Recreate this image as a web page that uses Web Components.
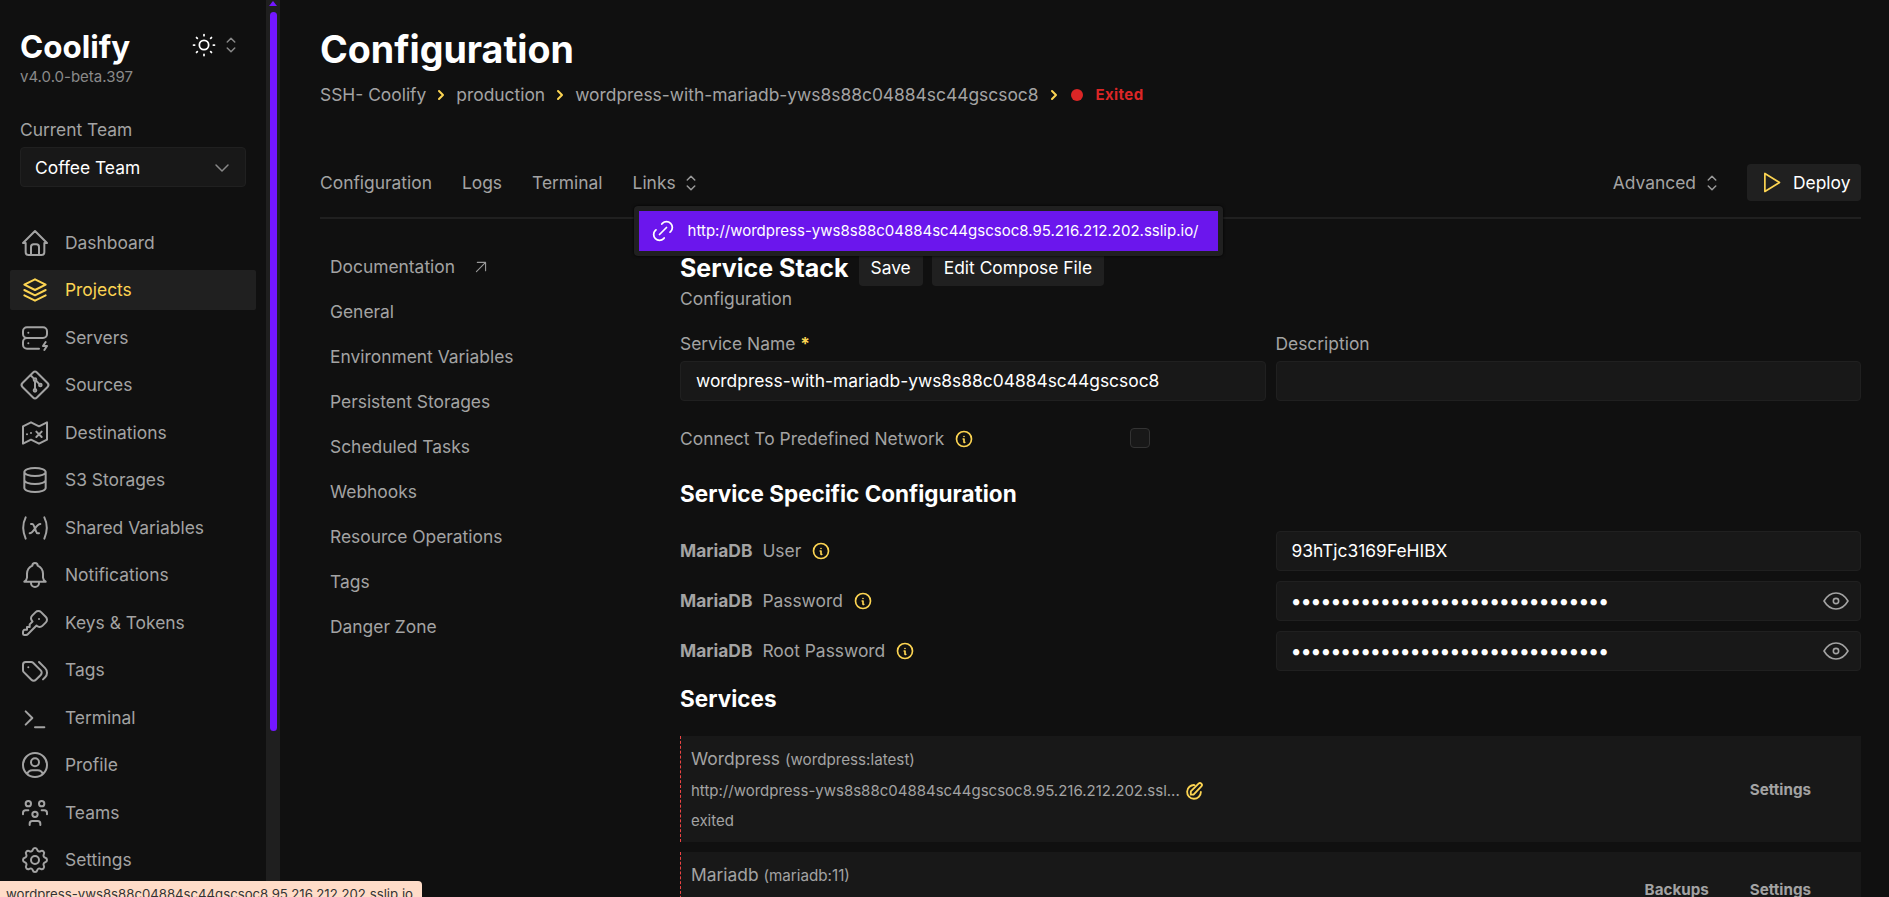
<!DOCTYPE html>
<html lang="en">
<head>
<meta charset="utf-8">
<title>Configuration | Coolify</title>
<style>
    html, body { margin: 0; height: 100%; overflow: hidden; background: #101010; }
    body { font-family: Inter, "Liberation Sans", sans-serif; color: #a3a3a3; font-size: 17.4px; line-height: 24px; }
</style>
</head>
<body>
<coolify-app>
    <coolify-sidebar slot="sidebar"></coolify-sidebar>
    <page-header slot="main"></page-header>
    <page-tabs slot="main"></page-tabs>
    <config-layout slot="main">
        <sub-nav slot="nav"></sub-nav>
        <service-stack-form slot="content"></service-stack-form>
    </config-layout>
</coolify-app>
<status-bubble>wordpress-yws8s88c04884sc44gscsoc8.95.216.212.202.sslip.io</status-bubble>

<script>
const ICONS = {
    home: 'M5 12H3l9-9 9 9h-2M5 12v7a2 2 0 0 0 2 2h10a2 2 0 0 0 2-2v-7M9 21v-6a2 2 0 0 1 2-2h2a2 2 0 0 1 2 2v6',
    stack: 'M12 4L4 8l8 4 8-4-8-4M4 12l8 4 8-4M4 16l8 4 8-4',
    server: 'M3 7a3 3 0 0 1 3-3h12a3 3 0 0 1 3 3v2a3 3 0 0 1-3 3H6a3 3 0 0 1-3-3zM15 20H6a3 3 0 0 1-3-3v-2a3 3 0 0 1 3-3h12M7 8v.01M7 16v.01M20 15l-2 3h3l-2 3',
    git: 'M15 12a1 1 0 1 0 2 0a1 1 0 1 0-2 0M11 8a1 1 0 1 0 2 0a1 1 0 1 0-2 0M11 16a1 1 0 1 0 2 0a1 1 0 1 0-2 0M12 15V9M15 11l-2-2M11 7L9.1 5.1M13.446 2.6l7.955 7.954a2.045 2.045 0 0 1 0 2.892l-7.955 7.955a2.045 2.045 0 0 1-2.892 0l-7.955-7.955a2.045 2.045 0 0 1 0-2.892l7.955-7.955a2.045 2.045 0 0 1 2.892 0z',
    map: 'M3 7l6-3 6 3 6-3v13l-6 3-6-3-6 3zM9 12v.01M6 13v.01M17 15l-4-4M13 15l4-4',
    database: 'M4 6a8 3 0 1 0 16 0a8 3 0 1 0-16 0M4 6v6a8 3 0 0 0 16 0V6M4 12v6a8 3 0 0 0 16 0v-6',
    variable: 'M5 4C2.5 9 2.5 14 5 20M19 4c2.5 5 2.5 10 0 16M9 9h1c1 0 1 1 2.016 3.527C13 15 13 16 14 16h1M8 16c1.5 0 3-2 4-3.5S14.5 9 16 9',
    bell: 'M10 5a2 2 0 1 1 4 0 7 7 0 0 1 4 6v3a4 4 0 0 0 2 3H4a4 4 0 0 0 2-3v-3a7 7 0 0 1 4-6M9 17v1a3 3 0 0 0 6 0v-1',
    key: 'M16.555 3.843l3.602 3.602a2.877 2.877 0 0 1 0 4.069l-2.643 2.643a2.877 2.877 0 0 1-4.069 0l-.301-.301-6.558 6.558a2 2 0 0 1-1.239.578L5.172 21H4a1 1 0 0 1-.993-.883L3 20v-1.172a2 2 0 0 1 .467-1.284l.119-.13L4 17h2v-2h2v-2l2.144-2.144-.301-.301a2.877 2.877 0 0 1 0-4.069l2.643-2.643a2.877 2.877 0 0 1 4.069 0zM15 9h.01',
    tags: 'M3 8v4.172a2 2 0 0 0 .586 1.414l5.71 5.71a2.41 2.41 0 0 0 3.408 0l3.592-3.592a2.41 2.41 0 0 0 0-3.408l-5.71-5.71A2 2 0 0 0 9.172 6H5a2 2 0 0 0-2 2zM18 19l1.592-1.592a4.82 4.82 0 0 0 0-6.816L15 6M7 10h-.01',
    terminal: 'M5 7l5 5-5 5M12 19h7',
    profile: 'M3 12a9 9 0 1 0 18 0a9 9 0 1 0-18 0M9 10a3 3 0 1 0 6 0a3 3 0 1 0-6 0M6.168 18.849A4 4 0 0 1 10 16h4a4 4 0 0 1 3.834 2.855',
    users: 'M10 13a2 2 0 1 0 4 0a2 2 0 0 0-4 0M8 21v-1a2 2 0 0 1 2-2h4a2 2 0 0 1 2 2v1M15 5a2 2 0 1 0 4 0a2 2 0 0 0-4 0M17 10h2a2 2 0 0 1 2 2v1M5 5a2 2 0 1 0 4 0a2 2 0 0 0-4 0M3 13v-1a2 2 0 0 1 2-2h2',
    settings: 'M10.325 4.317c.426-1.756 2.924-1.756 3.35 0a1.724 1.724 0 0 0 2.573 1.066c1.543-.94 3.31.826 2.37 2.37a1.724 1.724 0 0 0 1.065 2.572c1.756.426 1.756 2.924 0 3.35a1.724 1.724 0 0 0-1.066 2.573c.94 1.543-.826 3.31-2.37 2.37a1.724 1.724 0 0 0-2.572 1.065c-.426 1.756-2.924 1.756-3.35 0a1.724 1.724 0 0 0-2.573-1.066c-1.543.94-3.31-.826-2.37-2.37a1.724 1.724 0 0 0-1.065-2.572c-1.756-.426-1.756-2.924 0-3.35a1.724 1.724 0 0 0 1.066-2.573c-.94-1.543.826-3.31 2.37-2.37c1 .608 2.296.07 2.572-1.065zM9 12a3 3 0 1 0 6 0a3 3 0 0 0-6 0',
    sun: 'M8 12a4 4 0 1 0 8 0a4 4 0 1 0-8 0M3 12h1m8-9v1m8 8h1m-9 8v1M5.6 5.6l.7.7m12.1-.7l-.7.7m0 11.4l.7.7m-12.1-.7l-.7.7',
    updown: 'M8.25 15L12 18.75 15.75 15m-7.5-6L12 5.25 15.75 9',
    down: 'M6 9l6 6 6-6',
    right: 'M9 6l6 6-6 6',
    play: 'M7 4v16l13-8z',
    link: 'M9 15l6-6M11 6l.463-.536a5 5 0 0 1 7.071 7.072L18 13M13 18l-.397.534a5.068 5.068 0 0 1-7.127 0 4.972 4.972 0 0 1 0-7.071L6 11',
    info: 'M12 9h.01M3 12a9 9 0 1 0 18 0a9 9 0 0 0-18 0M11 12h1v4h1',
    eye: 'M10 12a2 2 0 1 0 4 0a2 2 0 0 0-4 0M21 12c-2.4 4-5.4 6-9 6s-6.6-2-9-6c2.4-4 5.4-6 9-6s6.6 2 9 6',
    external: 'M7 17L17 7M8 7h9v9',
    pencil: 'M12.5 5.5A7.5 7.5 0 1 0 19.5 13M8.5 16v-3.5L17 4a2.1 2.1 0 0 1 3 3l-8.5 9z'
};

// little helper so each class only has to declare its markup
function shadow(el, html) {
    el.attachShadow({ mode: 'open' });
    el.shadowRoot.innerHTML = html;
}

class CIcon extends HTMLElement {
    connectedCallback() {
        const size = this.getAttribute('size') || 24;
        const stroke = this.getAttribute('stroke') || 1.5;
        shadow(this, `
            <style>
                :host { display: inline-flex; flex: none; width: ${size}px; height: ${size}px; }
                svg { display: block; }
            </style>
            <svg width="${size}" height="${size}" viewBox="0 0 24 24" fill="none" stroke="currentColor"
                stroke-width="${stroke}" stroke-linecap="round" stroke-linejoin="round">
                <path d="${ICONS[this.getAttribute('name')]}"/>
            </svg>`);
    }
}
customElements.define('c-icon', CIcon);

class CoolifyApp extends HTMLElement {
    connectedCallback() {
        shadow(this, `
            <style>
                :host { display: flex; height: 897px; overflow: hidden; background: #101010; }
                .rail { flex: none; width: 14px; background: #1f1f1f; display: flex; justify-content: center; position: relative; }
                .rail i { display: block; width: 7px; height: 719px; margin-top: 12px; margin-left: 1px; border-radius: 4px; background: #7317ff; }
                .rail b { position: absolute; top: 1px; left: 3px; border: 4px solid transparent; border-top: 0; border-bottom: 5px solid #7317ff; }
                main { flex: 1; min-width: 0; padding: 30px 28px 0 40px; }
            </style>
            <slot name="sidebar"></slot>
            <div class="rail"><b></b><i></i></div>
            <main><slot name="main"></slot></main>`);
    }
}
customElements.define('coolify-app', CoolifyApp);

class NavItem extends HTMLElement {
    connectedCallback() {
        const active = this.hasAttribute('active');
        shadow(this, `
            <style>
                :host { display: flex; align-items: center; gap: 14px; height: 40px; padding-left: 9px; border-radius: 2px;
                    color: ${active ? '#fcd452' : '#a3a3a3'}; background: ${active ? '#202020' : 'transparent'}; }
            </style>
            <c-icon name="${this.getAttribute('icon')}" size="32"></c-icon>
            <slot></slot>`);
    }
}
customElements.define('nav-item', NavItem);

class CoolifySidebar extends HTMLElement {
    connectedCallback() {
        shadow(this, `
            <style>
                :host { display: block; flex: none; width: 266px; box-sizing: border-box; padding: 30px 10px 0; }
                .brand { display: flex; align-items: flex-start; padding-left: 10px; }
                .name { color: #fff; font-size: 31.4px; font-weight: 700; line-height: 34px; }
                .version { font-size: 15px; line-height: 20px; color: #8a8a8a; margin-top: 3px; }
                .theme { display: flex; align-items: center; margin-left: auto; margin-right: 13px; margin-top: 1px; color: #fff; }
                .theme c-icon + c-icon { color: #888; margin-left: 1px; }
                .team { line-height: 24px; padding-left: 10px; margin-top: 31px; }
                .select { display: flex; align-items: center; justify-content: space-between; height: 40px; margin: 5px 0 0 10px;
                    padding: 1px 11px 0 14px; box-sizing: border-box; width: 226px; background: #181818; border: 1px solid #202020; border-radius: 4px; color: #fff; }
                .select c-icon { color: #888; }
                nav { display: flex; flex-direction: column; gap: 7.5px; margin-top: 35.5px; }
            </style>
            <div class="brand">
                <div>
                    <div class="name">Coolify</div>
                    <div class="version">v4.0.0-beta.397</div>
                </div>
                <div class="theme">
                    <c-icon name="sun" size="28"></c-icon>
                    <c-icon name="updown" size="24"></c-icon>
                </div>
            </div>
            <div class="team">Current Team</div>
            <div class="select">Coffee Team <c-icon name="down" size="24"></c-icon></div>
            <nav>
                <nav-item icon="home">Dashboard</nav-item>
                <nav-item icon="stack" active>Projects</nav-item>
                <nav-item icon="server">Servers</nav-item>
                <nav-item icon="git">Sources</nav-item>
                <nav-item icon="map">Destinations</nav-item>
                <nav-item icon="database">S3 Storages</nav-item>
                <nav-item icon="variable">Shared Variables</nav-item>
                <nav-item icon="bell">Notifications</nav-item>
                <nav-item icon="key">Keys &amp; Tokens</nav-item>
                <nav-item icon="tags">Tags</nav-item>
                <nav-item icon="terminal">Terminal</nav-item>
                <nav-item icon="profile">Profile</nav-item>
                <nav-item icon="users">Teams</nav-item>
                <nav-item icon="settings">Settings</nav-item>
            </nav>`);
    }
}
customElements.define('coolify-sidebar', CoolifySidebar);

class PageHeader extends HTMLElement {
    connectedCallback() {
        shadow(this, `
            <style>
                :host { display: block; }
                h1 { margin: 0; color: #fff; font-size: 37.6px; font-weight: 700; line-height: 40px; }
                .crumbs { display: flex; align-items: center; height: 24px; margin-top: 13px; white-space: nowrap; }
                .crumbs c-icon { color: #fcd452; margin: 0 7px; }
                .dot { width: 12px; height: 12px; border-radius: 50%; background: #dc2626; margin: 0 13px 0 2px; }
                .status { color: #dc2626; font-size: 15px; font-weight: 700; letter-spacing: .4px; }
            </style>
            <h1>Configuration</h1>
            <div class="crumbs">
                <span>SSH- Coolify</span><c-icon name="right" size="16" stroke="3"></c-icon>
                <span>production</span><c-icon name="right" size="16" stroke="3"></c-icon>
                <span>wordpress-with-mariadb-yws8s88c04884sc44gscsoc8</span><c-icon name="right" size="16" stroke="3"></c-icon>
                <span class="dot"></span><span class="status">Exited</span>
            </div>`);
    }
}
customElements.define('page-header', PageHeader);

class PageTabs extends HTMLElement {
    connectedCallback() {
        shadow(this, `
            <style>
                :host { display: flex; align-items: center; gap: 30px; height: 37px; margin-top: 57px; padding-bottom: 16px; border-bottom: 2px solid #202020; white-space: nowrap; }
                .links, .adv { display: flex; align-items: center; gap: 3px; position: relative; }
                .adv { margin-left: auto; margin-right: 23px; gap: 4px; }
                c-icon { color: #999; }
                .deploy { display: flex; align-items: center; gap: 9px; height: 37px; width: 114px; box-sizing: border-box; padding-left: 10px; margin-left: -30px;
                    background: #202020; border-radius: 4px; color: #fff; }
                .deploy c-icon { color: #fcd452; }
                .menu { position: absolute; top: 35.5px; left: 1px; z-index: 5; width: 589px; box-sizing: border-box; padding: 5px; background: #202020;
                    border-radius: 4px; box-shadow: 0 0 3px #000; }
                .item { display: flex; align-items: center; gap: 11px; height: 40px; padding-left: 10px; background: #6b16ed; color: #fff; font-size: 15px; }
                .item c-icon { color: #fff; }
            </style>
            <span>Configuration</span>
            <span>Logs</span>
            <span>Terminal</span>
            <span class="links">Links <c-icon name="updown" size="24"></c-icon>
                <div class="menu"><div class="item"><c-icon name="link" size="28"></c-icon>http://wordpress-yws8s88c04884sc44gscsoc8.95.216.212.202.sslip.io/</div></div>
            </span>
            <span class="adv">Advanced <c-icon name="updown" size="24"></c-icon></span>
            <span class="deploy"><c-icon name="play" size="27"></c-icon>Deploy</span>`);
    }
}
customElements.define('page-tabs', PageTabs);

class ConfigLayout extends HTMLElement {
    connectedCallback() {
        shadow(this, `
            <style>
                :host { display: grid; grid-template-columns: 360px minmax(0, 1fr); }
            </style>
            <slot name="nav"></slot>
            <slot name="content"></slot>`);
    }
}
customElements.define('config-layout', ConfigLayout);

class SubNav extends HTMLElement {
    connectedCallback() {
        const items = ['General', 'Environment Variables', 'Persistent Storages', 'Scheduled Tasks', 'Webhooks', 'Resource Operations', 'Tags', 'Danger Zone'];
        shadow(this, `
            <style>
                :host { display: block; padding: 25px 0 0 10px; }
                div { display: flex; align-items: center; height: 45px; }
                c-icon { margin-left: 15px; color: #999; }
            </style>
            <div>Documentation <c-icon name="external" size="22" stroke="1.2"></c-icon></div>
            ${items.map(i => `<div>${i}</div>`).join('')}`);
    }
}
customElements.define('sub-nav', SubNav);

class CInfo extends HTMLElement {
    connectedCallback() {
        shadow(this, `
            <style>:host { display: inline-flex; color: #fcd452; margin-left: 10px; }</style>
            <c-icon name="info" size="20" stroke="2"></c-icon>`);
    }
}
customElements.define('c-info', CInfo);

class CField extends HTMLElement {
    connectedCallback() {
        const eye = this.hasAttribute('secret');
        shadow(this, `
            <style>
                :host { display: flex; align-items: center; height: 40px; box-sizing: border-box; padding: 0 8px 0 15px; background: #181818;
                    border: 1px solid #202020; border-radius: 4px; color: #fff; white-space: nowrap; }
                :host([secret]) { font-size: 20px; letter-spacing: -1.33px; padding-left: 14px; }
                c-icon { margin-left: auto; color: #a3a3a3; }
            </style>
            <slot></slot>
            ${eye ? '<c-icon name="eye" size="32" stroke="1.2"></c-icon>' : ''}`);
    }
}
customElements.define('c-field', CField);

class CBtn extends HTMLElement {
    connectedCallback() {
        shadow(this, `
            <style>
                :host { display: inline-flex; align-items: center; height: 37px; padding: 0 12px; background: #202020; border-radius: 4px; color: #fff; }
            </style>
            <slot></slot>`);
    }
}
customElements.define('c-btn', CBtn);

class ServiceRow extends HTMLElement {
    connectedCallback() {
        shadow(this, `
            <style>
                :host { display: flex; align-items: center; background: #181818; border-left: 1px dashed #ef4444; padding: 10px 50px 9px 10px; }
                .info { flex: 1; min-width: 0; }
                .name { line-height: 24px; margin-top: 1px; }
                .name small { font-size: 15.2px; }
                .actions { display: flex; gap: 41px; font-size: 15.2px; font-weight: 700; color: #a3a3a3; }
                ::slotted([slot=line]) { display: block; font-size: 15px; line-height: 24px; margin-top: 6.5px; }
            </style>
            <div class="info">
                <div class="name">${this.getAttribute('name')} <small>(${this.getAttribute('image')})</small></div>
                <slot name="line"></slot>
            </div>
            <div class="actions"><slot name="action"></slot></div>`);
    }
}
customElements.define('service-row', ServiceRow);

class ServiceStackForm extends HTMLElement {
    connectedCallback() {
        const dots = '•'.repeat(32);
        shadow(this, `
            <style>
                :host { display: block; padding-top: 30px; }
                .top { display: flex; align-items: center; gap: 9px; }
                h2 { margin: 0 1px 0 0; color: #fff; font-size: 25px; font-weight: 700; line-height: 32px; }
                h3 { margin: 0; color: #fff; font-size: 22.5px; font-weight: 700; line-height: 28px; }
                .sub { line-height: 24px; margin-top: 1px; }
                .cols { display: grid; grid-template-columns: 1fr 1fr; gap: 5px 10px; margin-top: 21px; }
                .cols label { line-height: 24px; }
                .req { color: #fcd452; font-weight: 700; }
                .check { display: flex; align-items: center; height: 24px; margin-top: 26px; margin-bottom: -1px; width: 470px; }
                .box { width: 20px; height: 20px; box-sizing: border-box; margin-left: auto; margin-top: -2px; background: #181818; border: 1px solid #333; border-radius: 4px; }
                .rows { display: grid; grid-template-columns: 1fr 1fr; gap: 10px; align-items: center; margin-top: 23px; }
                .rows label { display: flex; align-items: center; }
                .rows b { margin-right: 10px; font-weight: 700; }
                .list { display: flex; flex-direction: column; gap: 10px; margin-top: 23px; }
                .url { display: flex !important; align-items: center; }
                .url c-icon { color: #fcd452; margin-left: 3px; }
            </style>
            <div class="top">
                <h2>Service Stack</h2>
                <c-btn>Save</c-btn>
                <c-btn>Edit Compose File</c-btn>
            </div>
            <div class="sub">Configuration</div>
            <div class="cols">
                <label>Service Name <span class="req">*</span></label>
                <label>Description</label>
                <c-field>wordpress-with-mariadb-yws8s88c04884sc44gscsoc8</c-field>
                <c-field></c-field>
            </div>
            <div class="check">Connect To Predefined Network <c-info></c-info><span class="box"></span></div>
            <h3 style="margin-top:30px">Service Specific Configuration</h3>
            <div class="rows">
                <label><b>MariaDB</b> User <c-info></c-info></label>
                <c-field>93hTjc3169FeHIBX</c-field>
                <label><b>MariaDB</b> Password <c-info></c-info></label>
                <c-field secret>${dots}</c-field>
                <label><b>MariaDB</b> Root Password <c-info></c-info></label>
                <c-field secret>${dots}</c-field>
            </div>
            <h3 style="margin-top:14px">Services</h3>
            <div class="list">
                <service-row name="Wordpress" image="wordpress:latest">
                    <span slot="line" class="url">http://wordpress-yws8s88c04884sc44gscsoc8.95.216.212.202.ssl... <c-icon name="pencil" size="22" stroke="2"></c-icon></span>
                    <span slot="line">exited</span>
                    <span slot="action">Settings</span>
                </service-row>
                <service-row name="Mariadb" image="mariadb:11">
                    <span slot="line">exited</span>
                    <span slot="action">Backups</span>
                    <span slot="action">Settings</span>
                </service-row>
            </div>`);
    }
}
customElements.define('service-stack-form', ServiceStackForm);

class StatusBubble extends HTMLElement {
    connectedCallback() {
        shadow(this, `
            <style>
                :host { position: fixed; left: 0; top: 881px; z-index: 9; width: 422px; height: 30px; box-sizing: border-box; padding: 3px 0 0 6px;
                    background: #ffdcc8; border-top-right-radius: 4px; color: #333; font-size: 13.2px; line-height: 20px; white-space: nowrap; }
            </style>
            <slot></slot>`);
    }
}
customElements.define('status-bubble', StatusBubble);
</script>
</body>
</html>
